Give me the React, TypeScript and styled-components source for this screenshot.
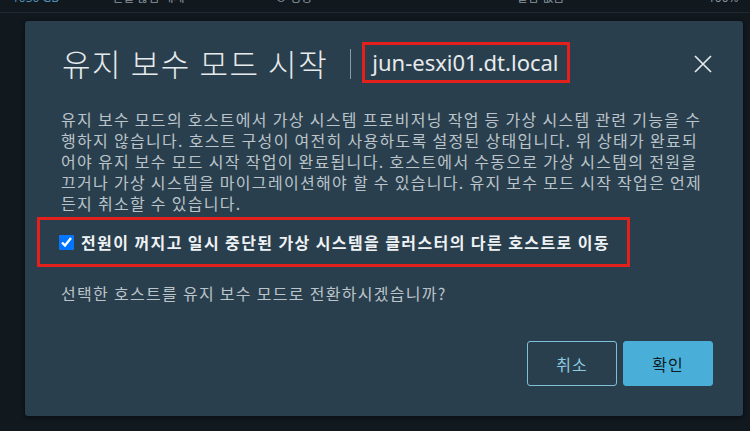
import styled, { createGlobalStyle } from 'styled-components';

const GlobalStyle = createGlobalStyle`
  html, body {
    margin: 0;
    padding: 0;
    background: #11181e;
  }
  body {
    font-family: "Noto Sans", "Noto Sans CJK KR", sans-serif;
    overflow: hidden;
  }
`;

const strip = [
    { text: '1030 GB', width: 100, tone: '#4d8fb5' },
    { text: '연결 끊김 해제', width: 163, tone: '#8a969e' },
    { text: '⊗ 정상', width: 242, tone: '#8a969e' },
    { text: '알람 없음', width: 191, tone: '#8a969e' },
    { text: '100%', width: 42, tone: '#8a969e' },
];

const App = () => {
    return (
        <Page>
            <GlobalStyle />
            <TopStrip>
                {strip.map((c) => (
                    <StripCell key={c.text} $width={c.width} $tone={c.tone}>
                        {c.text}
                    </StripCell>
                ))}
            </TopStrip>
            <Dialog>
                <Header>
                    <Title>유지 보수 모드 시작</Title>
                    <Divider />
                    <Host>jun-esxi01.dt.local</Host>
                    <CloseButton aria-label="닫기">
                        <svg width="18" height="18" viewBox="0 0 18 18">
                            <path d="M1 1 L17 17 M17 1 L1 17" stroke="#e3e8eb" strokeWidth="1.7" fill="none" />
                        </svg>
                    </CloseButton>
                </Header>
                <Description>
                    유지 보수 모드의 호스트에서 가상 시스템 프로비저닝 작업 등 가상 시스템 관련 기능을 수행하지 않습니다. 호스트 구성이 여전히 사용하도록 설정된 상태입니다. 위 상태가 완료되어야 유지 보수 모드 시작 작업이 완료됩니다. 호스트에서 수동으로 가상 시스템의 전원을 끄거나 가상 시스템을 마이그레이션해야 할 수 있습니다. 유지 보수 모드 시작 작업은 언제든지 취소할 수 있습니다.
                </Description>
                <CheckRow>
                    <CheckBox type="checkbox" defaultChecked />
                    <CheckLabel>전원이 꺼지고 일시 중단된 가상 시스템을 클러스터의 다른 호스트로 이동</CheckLabel>
                </CheckRow>
                <Question>선택한 호스트를 유지 보수 모드로 전환하시겠습니까?</Question>
                <Footer>
                    <Button>취소</Button>
                    <Button $primary>확인</Button>
                </Footer>
            </Dialog>
        </Page>
    );
};

export default App;

const Page = styled.div`
  width: 750px;
  height: 431px;
  overflow: hidden;
  background: #11181e;
`;

const TopStrip = styled.div`
  height: 12px;
  display: flex;
  overflow: hidden;
  padding-left: 12px;
  border-bottom: 1px solid #1e2a32;
`;

const StripCell = styled.span<{ $width: number; $tone: string }>`
  flex: 0 0 ${(p) => p.$width}px;
  margin-top: -9px;
  font-size: 12px;
  line-height: 14px;
  color: ${(p) => p.$tone};
  white-space: nowrap;
`;

const Dialog = styled.section`
  margin: 8px 0 0 25px;
  width: 718px;
  height: 395px;
  box-sizing: border-box;
  padding: 21px 30px 30px 36px;
  display: flex;
  flex-direction: column;
  background: #2a3f4d;
  border-radius: 3px;
  box-shadow: 0 1px 4px rgba(0, 0, 0, 0.55);
`;

const Header = styled.div`
  height: 41px;
  display: flex;
  align-items: center;
`;

const Title = styled.h2`
  margin: 0 0 0 1px;
  font-family: "Noto Sans CJK KR", sans-serif;
  font-size: 31px;
  font-weight: 300;
  letter-spacing: 1.6px;
  line-height: 41px;
  color: #e6eaec;
  white-space: nowrap;
`;

const Divider = styled.span`
  width: 1px;
  height: 30px;
  margin: 2px 11px 0 22px;
  background: #8c9ba4;
`;

const Host = styled.span`
  border: 3px solid #e3201b;
  padding: 0 8px 0 7px;
  font-family: "Noto Sans", sans-serif;
  font-size: 22px;
  line-height: 35px;
  color: #e6eaec;
  white-space: nowrap;
`;

const CloseButton = styled.button`
  margin: 3px 1px 0 auto;
  padding: 0;
  border: 0;
  background: none;
  display: flex;
  cursor: pointer;
`;

const Description = styled.p`
  margin: 26px 0 0;
  max-width: 646px;
  font-family: "Noto Sans CJK KR", sans-serif;
  font-size: 16px;
  line-height: 21px;
  letter-spacing: 1.3px;
  color: #bac4ca;
`;

const CheckRow = styled.label`
  margin: 3px 0 0 -24px;
  width: 593px;
  height: 50px;
  box-sizing: border-box;
  border: 3px solid #e3201b;
  padding-left: 19px;
  display: flex;
  align-items: center;
  gap: 7px;
`;

const CheckBox = styled.input`
  margin: 1px 0 0;
  width: 15px;
  height: 15px;
`;

const CheckLabel = styled.span`
  font-family: "Noto Sans CJK KR", sans-serif;
  font-size: 16px;
  font-weight: 600;
  letter-spacing: 1.4px;
  color: #eef2f4;
`;

const Question = styled.p`
  margin: 16px 0 0;
  font-family: "Noto Sans CJK KR", sans-serif;
  font-size: 16px;
  line-height: 21px;
  letter-spacing: 1.3px;
  color: #bac4ca;
`;

const Footer = styled.div`
  margin-top: auto;
  display: flex;
  justify-content: flex-end;
  gap: 6px;
`;

const Button = styled.button<{ $primary?: boolean }>`
  width: 90px;
  height: 45px;
  box-sizing: border-box;
  border-radius: 3px;
  border: 1px solid ${(p) => (p.$primary ? '#49afd9' : '#7fbfd8')};
  background: ${(p) => (p.$primary ? '#49afd9' : 'transparent')};
  color: ${(p) => (p.$primary ? '#0e1b22' : '#8ccbe2')};
  font-family: "Noto Sans CJK KR", sans-serif;
  font-size: 16px;
  letter-spacing: 1px;
  cursor: pointer;
`;
